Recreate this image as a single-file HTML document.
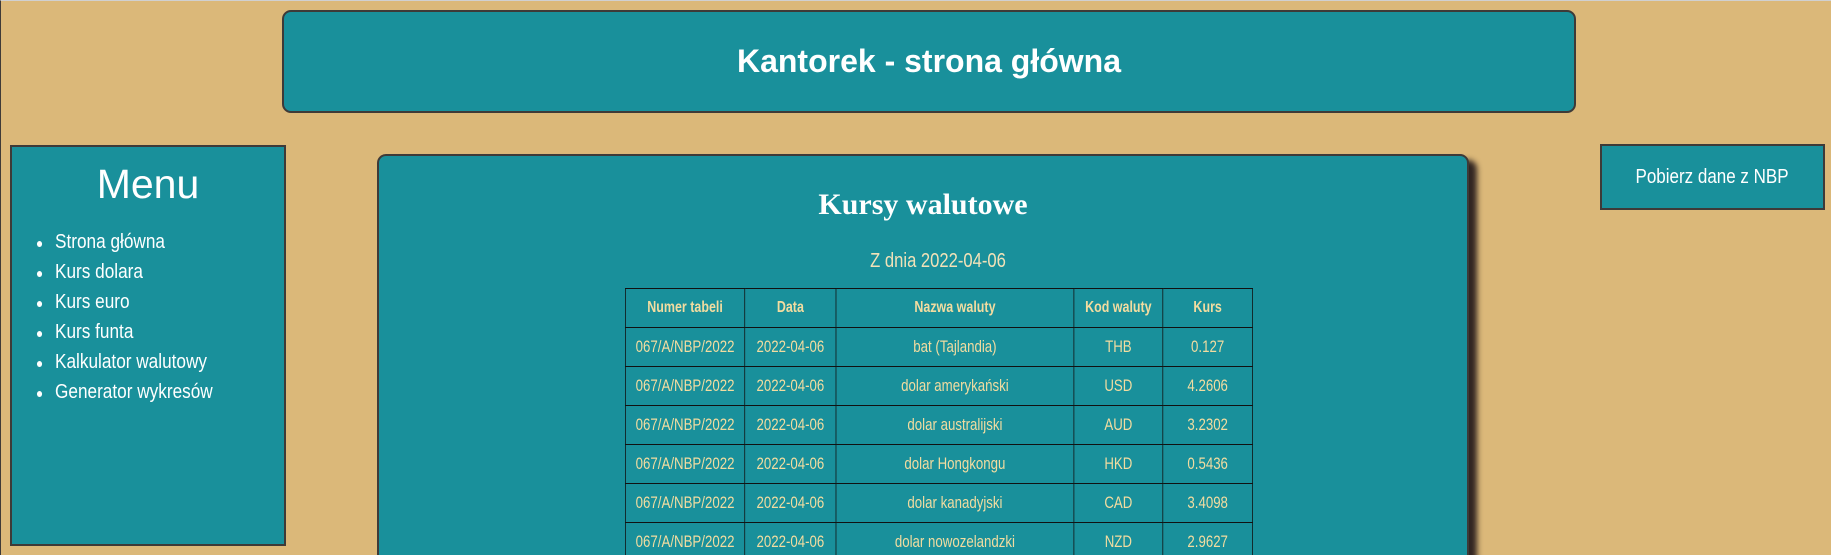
<!DOCTYPE html>
<html><head><meta charset="utf-8"><style>
*{margin:0;padding:0;box-sizing:border-box}
html,body{width:1831px;height:555px;overflow:hidden}
body{background:#dbb879;position:relative;font-family:"Liberation Sans",sans-serif;border-left:1px solid #3e3a38;border-top:1px solid #d0d0d0}
.box{position:absolute;background:#19909b;border:2px solid #3e3a38}
#hdr{left:281px;top:9px;width:1294px;height:103px;border-radius:9px}
#hdr h1{position:absolute;left:0;right:0;top:0;text-align:center;font:bold 32px "Liberation Sans",sans-serif;line-height:99px;color:#fff}
#menu{left:9px;top:144px;width:276px;height:401px}
#menu h2{position:absolute;left:0;right:0;top:12px;text-align:center;font-weight:normal;font-size:41px;color:#fff;line-height:50px}
#menu ul{position:absolute;left:43px;top:84px;list-style:none;color:#fff;font-size:20px;transform:scaleX(.86);transform-origin:0 0}
#menu li{position:absolute;left:0;white-space:nowrap;line-height:22px}
#menu li::before{content:"";position:absolute;left:-21px;top:10px;width:6px;height:6px;border-radius:50%;background:#fff}
#main{left:376px;top:153px;width:1092px;height:420px;border-radius:9px;box-shadow:8px 6px 6px rgba(40,30,30,.95)}
#main h2{position:absolute;left:0;right:0;top:29px;text-align:center;font:bold 30px "Liberation Serif",serif;line-height:40px;color:#fff}
#main .d{position:absolute;left:409px;top:93px;width:300px;text-align:center;font-size:20px;line-height:24px;color:#f2e2b8;transform:scaleX(.83)}
table{position:absolute;left:246px;top:132px;width:804px;table-layout:fixed;border-collapse:collapse;color:#f2dca0;font-size:17px;transform:scaleX(.78);transform-origin:0 0}
td,th{border:1.5px solid #111;height:39px;text-align:center;padding:0;white-space:nowrap;overflow:hidden}
th{font-weight:bold;font-size:16px}
#btn{left:1599px;top:143px;width:225px;height:66px;color:#fff;font-size:20px;text-align:center;line-height:62px}
#btn span{display:inline-block;transform:scaleX(.85)}
</style></head><body>
<div class="box" id="hdr"><h1>Kantorek - strona główna</h1></div>
<div class="box" id="menu"><h2>Menu</h2>
<ul>
<li style="top:0">Strona główna</li>
<li style="top:30px">Kurs dolara</li>
<li style="top:60px">Kurs euro</li>
<li style="top:90px">Kurs funta</li>
<li style="top:120px">Kalkulator walutowy</li>
<li style="top:150px">Generator wykresów</li>
</ul></div>
<div class="box" id="main">
<h2>Kursy walutowe</h2>
<div class="d">Z dnia 2022-04-06</div>
<table>
<colgroup><col style="width:153px"><col style="width:117px"><col style="width:305px"><col style="width:114px"><col style="width:115px"></colgroup>
<tr><th>Numer tabeli</th><th>Data</th><th>Nazwa waluty</th><th>Kod waluty</th><th>Kurs</th></tr>
<tr><td>067/A/NBP/2022</td><td>2022-04-06</td><td>bat (Tajlandia)</td><td>THB</td><td>0.127</td></tr>
<tr><td>067/A/NBP/2022</td><td>2022-04-06</td><td>dolar amerykański</td><td>USD</td><td>4.2606</td></tr>
<tr><td>067/A/NBP/2022</td><td>2022-04-06</td><td>dolar australijski</td><td>AUD</td><td>3.2302</td></tr>
<tr><td>067/A/NBP/2022</td><td>2022-04-06</td><td>dolar Hongkongu</td><td>HKD</td><td>0.5436</td></tr>
<tr><td>067/A/NBP/2022</td><td>2022-04-06</td><td>dolar kanadyjski</td><td>CAD</td><td>3.4098</td></tr>
<tr><td>067/A/NBP/2022</td><td>2022-04-06</td><td>dolar nowozelandzki</td><td>NZD</td><td>2.9627</td></tr>
</table>
</div>
<div class="box" id="btn"><span>Pobierz dane z NBP</span></div>
</body></html>
